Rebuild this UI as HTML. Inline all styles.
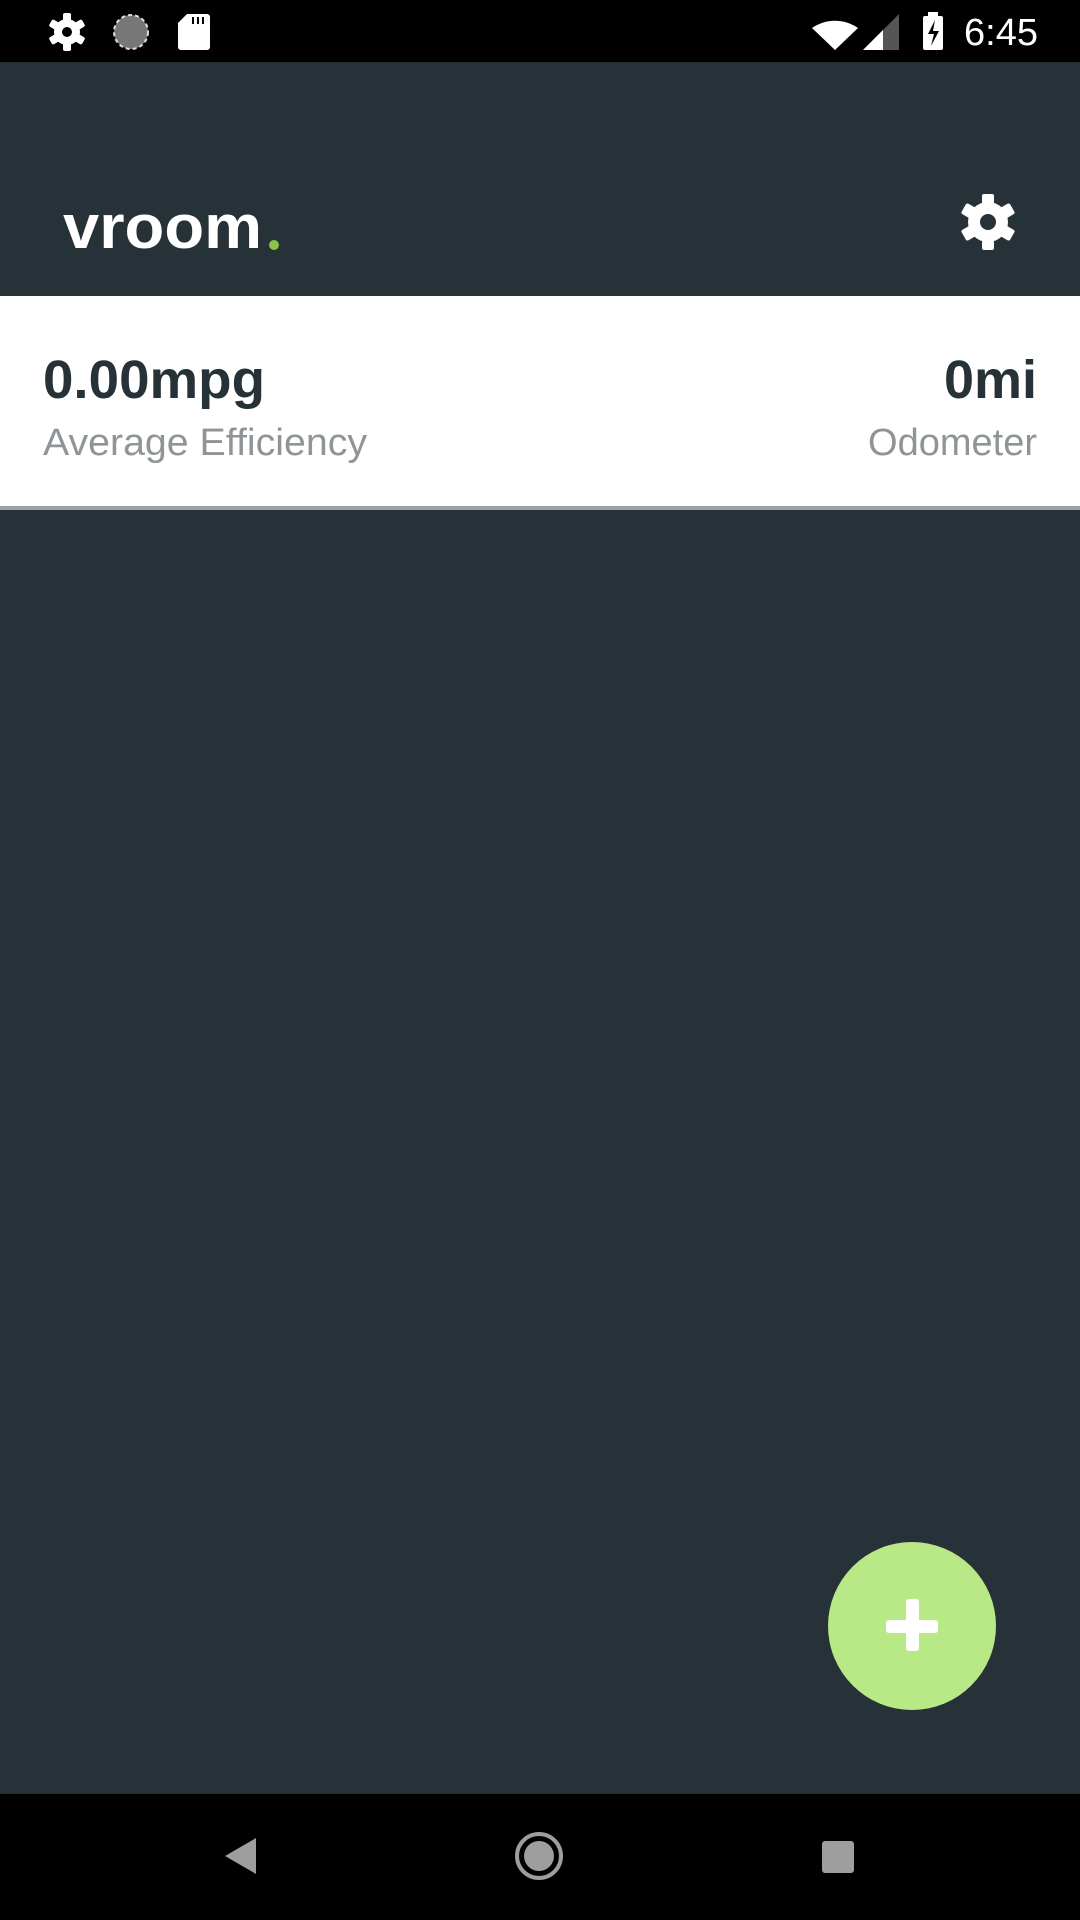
<!DOCTYPE html>
<html><head><meta charset="utf-8"><style>
*{margin:0;padding:0}
body{width:1080px;height:1920px;background:#263238;position:relative;overflow:hidden;font-family:"Liberation Sans",sans-serif}
svg{position:absolute;left:0;top:0}
</style></head><body>
<svg width="1080" height="1920" viewBox="0 0 1080 1920">
<rect x="0" y="0" width="1080" height="62" fill="#000"/>
<rect x="0" y="62" width="1080" height="234" fill="#263238"/>
<rect x="0" y="296" width="1080" height="210" fill="#fff"/>
<rect x="0" y="506" width="1080" height="4" fill="#9ea1a3"/>
<rect x="0" y="1794" width="1080" height="126" fill="#000"/>

<!-- status bar icons -->
<g transform="translate(67,32)" fill="#fff">
<circle r="13"/>
<g><rect x="-4" y="-19" width="8" height="38" rx="2"/><rect x="-4" y="-19" width="8" height="38" rx="2" transform="rotate(60)"/><rect x="-4" y="-19" width="8" height="38" rx="2" transform="rotate(120)"/></g>
<circle r="5" fill="#000"/>
</g>
<circle cx="131" cy="32" r="17" fill="#777"/>
<circle cx="131" cy="32" r="17" fill="none" stroke="#ddd" stroke-width="2" stroke-dasharray="4 3"/>
<path d="M187 14 h20 a3 3 0 0 1 3 3 v30 a3 3 0 0 1 -3 3 h-26 a3 3 0 0 1 -3 -3 v-24 z" fill="#fff"/>
<rect x="192" y="17" width="2" height="7" fill="#000"/><rect x="197" y="17" width="2" height="7" fill="#000"/><rect x="202" y="17" width="2" height="7" fill="#000"/>
<path d="M812 28 a40 40 0 0 1 46 0 l-23 22 z" fill="#fff"/>
<path d="M863 50 l36 -36 v36 z" fill="#555"/>
<path d="M863 50 l20 -20 v20 z" fill="#fff"/>
<rect x="923" y="16" width="20" height="34" rx="2" fill="#fff"/><rect x="928" y="12" width="10" height="5" fill="#fff"/>
<path d="M935 20 l-7 14 h6 l-3 12 l8 -15 h-6 z" fill="#000"/>
<text x="1038" y="45" font-size="38" fill="#fff" text-anchor="end">6:45</text>

<!-- header -->
<text x="63" y="248" font-size="62" font-weight="bold" fill="#fff" textLength="199" lengthAdjust="spacingAndGlyphs">vroom</text>
<circle cx="274" cy="245" r="5" fill="#8bc34a"/>
<g transform="translate(988,222)" fill="#fff">
<circle r="20"/>
<rect x="-6" y="-28" width="12" height="56" rx="2"/><rect x="-6" y="-28" width="12" height="56" rx="2" transform="rotate(60)"/><rect x="-6" y="-28" width="12" height="56" rx="2" transform="rotate(120)"/>
<circle r="8" fill="#263238"/>
</g>

<!-- card -->
<text x="43" y="398" font-size="54" font-weight="bold" fill="#263238" textLength="222" lengthAdjust="spacingAndGlyphs">0.00mpg</text>
<text x="43" y="455" font-size="38" fill="#8f9497" textLength="324" lengthAdjust="spacingAndGlyphs">Average Efficiency</text>
<text x="1037" y="398" font-size="54" font-weight="bold" fill="#263238" text-anchor="end">0mi</text>
<text x="1037" y="455" font-size="38" fill="#8f9497" text-anchor="end">Odometer</text>

<!-- FAB -->
<circle cx="912" cy="1626" r="84" fill="#b9e887"/>
<rect x="886" y="1620" width="52" height="13" rx="3" fill="#fff"/>
<rect x="906" y="1599" width="13" height="52" rx="3" fill="#fff"/>

<!-- nav -->
<path d="M256 1838 v36 l-31 -18 z" fill="#9e9e9e"/>
<circle cx="539" cy="1856" r="22" fill="none" stroke="#9e9e9e" stroke-width="4"/>
<circle cx="539" cy="1856" r="15" fill="#9e9e9e"/>
<rect x="822" y="1841" width="32" height="32" rx="3" fill="#9e9e9e"/>
</svg>
</body></html>
